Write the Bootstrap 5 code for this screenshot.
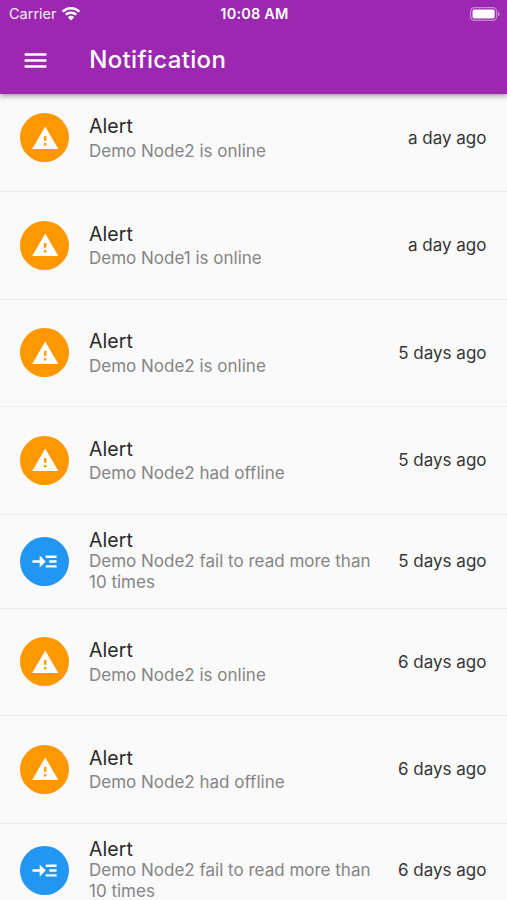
<!DOCTYPE html>
<html lang="en">
<head>
<meta charset="utf-8">
<meta name="viewport" content="width=device-width, initial-scale=1">
<title>Notification</title>
<link href="https://cdn.jsdelivr.net/npm/bootstrap@5.3.0/dist/css/bootstrap.min.css" rel="stylesheet">
<style>
body { font-family: Inter, "Liberation Sans", sans-serif; background: #fafafa; color: #292929; height: 900px; }
.app-header { background: #9c27b0; height: 94px; box-shadow: 0 2px 5px rgba(0,0,0,.38); z-index: 2; }
.status-bar { height: 27px; padding: 0 7px 0 9px; font-size: 14.5px; line-height: 27px; }
.status-side { flex: 1 1 0; }
.carrier { letter-spacing: 0; opacity: .92; }
.clock { font-weight: 600; letter-spacing: .2px; }
.title-bar { height: 66px; padding-left: 20.5px; }
.page-title { font-size: 24px; font-weight: 500; line-height: 30px; letter-spacing: .33px; margin-left: 39.8px; }
.feed { min-height: 0; }
/* The list is scrolled slightly beneath the header. */
.feed-list { margin-top: -9.3px; }
.feed-item { height: 107.5px; flex: none; padding: 0 20.5px 0 20.4px; border-bottom: 1px solid #eeeeee; }
.feed-item.tall { height: 94px; }
.avatar { width: 49px; height: 49px; margin-right: 19.6px; background: #ff9800; color: #fff; }
.tall .avatar { background: #2196f3; }
.item-title { font-size: 19.5px; line-height: 24px; letter-spacing: .1px; margin-bottom: 2px; }
.item-sub { font-size: 17px; line-height: 20.7px; letter-spacing: 0; color: #858585; margin-top: 2.7px; }
.tall .item-title { line-height: 22px; margin-bottom: 0; }
.tall .item-sub { margin-top: 0; line-height: 21px; }
.item-time { font-size: 17px; color: #353535; margin-left: 16px; padding-top: 1px; }
</style>
<script src="https://cdn.jsdelivr.net/npm/bootstrap@5.3.0/dist/js/bootstrap.bundle.min.js"></script>
</head>
<body class="d-flex flex-column overflow-hidden">
<svg class="d-none">
  <symbol id="warn" viewBox="0 0 24 24"><path fill="currentColor" d="M1 21h22L12 2 1 21zm12-3h-2v-2h2v2zm0-4h-2v-4h2v4z"/></symbol>
  <symbol id="read" viewBox="0 0 24 24"><path fill="currentColor" d="M22 7h-9v2h9V7zm0 8h-9v2h9v-2zm0-4h-6v2h6v-2zm-9 1L8 7v4H2v2h6v4l5-5z"/></symbol>
</svg>
<header class="app-header position-relative flex-shrink-0 text-white">
  <div class="status-bar d-flex align-items-center">
    <div class="status-side d-flex align-items-center">
      <span class="carrier">Carrier</span>
      <svg class="ms-1" width="20" height="15" viewBox="0 0 20 15" fill="none" stroke="#fff" stroke-width="2.5"><path d="M1.6 5.6a12 12 0 0 1 16.8 0M4.8 8.7a7.6 7.6 0 0 1 10.4 0"/><path fill="#fff" stroke="none" d="M6.8 11.2a4.7 4.7 0 0 1 6.4 0L10 14.5z"/></svg>
    </div>
    <span class="clock">10:08 AM</span>
    <div class="status-side d-flex justify-content-end">
      <svg width="30" height="14" viewBox="0 0 30 14"><rect x=".6" y=".6" width="26" height="12.8" rx="3.8" fill="none" stroke="#fff" stroke-opacity=".45" stroke-width="1.2"/><rect x="2.5" y="2.5" width="22.2" height="9" rx="2" fill="#fff"/><path d="M28 4.8v4.4q1.7-.7 1.7-2.2T28 4.8z" fill="#fff" fill-opacity=".5"/></svg>
    </div>
  </div>
  <div class="title-bar d-flex align-items-center">
    <svg width="29" height="29" viewBox="0 0 24 24" role="img" aria-label="Menu"><path fill="#fff" d="M3 18h18v-2H3v2zm0-5h18v-2H3v2zm0-7v2h18V6H3z"/></svg>
    <h1 class="page-title mb-0">Notification</h1>
  </div>
</header>
<main class="feed flex-grow-1 overflow-hidden">
  <div class="feed-list d-flex flex-column">
    <div class="feed-item d-flex align-items-center"><div class="avatar rounded-circle d-flex flex-shrink-0 align-items-center justify-content-center"><svg width="28.5" height="28.5"><use href="#warn"/></svg></div><div class="flex-grow-1"><div class="item-title">Alert</div><div class="item-sub">Demo Node2 is online</div></div><div class="item-time text-nowrap">a day ago</div></div>
    <div class="feed-item d-flex align-items-center"><div class="avatar rounded-circle d-flex flex-shrink-0 align-items-center justify-content-center"><svg width="28.5" height="28.5"><use href="#warn"/></svg></div><div class="flex-grow-1"><div class="item-title">Alert</div><div class="item-sub">Demo Node1 is online</div></div><div class="item-time text-nowrap">a day ago</div></div>
    <div class="feed-item d-flex align-items-center"><div class="avatar rounded-circle d-flex flex-shrink-0 align-items-center justify-content-center"><svg width="28.5" height="28.5"><use href="#warn"/></svg></div><div class="flex-grow-1"><div class="item-title">Alert</div><div class="item-sub">Demo Node2 is online</div></div><div class="item-time text-nowrap">5 days ago</div></div>
    <div class="feed-item d-flex align-items-center"><div class="avatar rounded-circle d-flex flex-shrink-0 align-items-center justify-content-center"><svg width="28.5" height="28.5"><use href="#warn"/></svg></div><div class="flex-grow-1"><div class="item-title">Alert</div><div class="item-sub">Demo Node2 had offline</div></div><div class="item-time text-nowrap">5 days ago</div></div>
    <div class="feed-item tall d-flex align-items-center"><div class="avatar rounded-circle d-flex flex-shrink-0 align-items-center justify-content-center"><svg width="29" height="29"><use href="#read"/></svg></div><div class="flex-grow-1"><div class="item-title">Alert</div><div class="item-sub">Demo Node2 fail to read more than 10 times</div></div><div class="item-time text-nowrap">5 days ago</div></div>
    <div class="feed-item d-flex align-items-center"><div class="avatar rounded-circle d-flex flex-shrink-0 align-items-center justify-content-center"><svg width="28.5" height="28.5"><use href="#warn"/></svg></div><div class="flex-grow-1"><div class="item-title">Alert</div><div class="item-sub">Demo Node2 is online</div></div><div class="item-time text-nowrap">6 days ago</div></div>
    <div class="feed-item d-flex align-items-center"><div class="avatar rounded-circle d-flex flex-shrink-0 align-items-center justify-content-center"><svg width="28.5" height="28.5"><use href="#warn"/></svg></div><div class="flex-grow-1"><div class="item-title">Alert</div><div class="item-sub">Demo Node2 had offline</div></div><div class="item-time text-nowrap">6 days ago</div></div>
    <div class="feed-item tall d-flex align-items-center"><div class="avatar rounded-circle d-flex flex-shrink-0 align-items-center justify-content-center"><svg width="29" height="29"><use href="#read"/></svg></div><div class="flex-grow-1"><div class="item-title">Alert</div><div class="item-sub">Demo Node2 fail to read more than 10 times</div></div><div class="item-time text-nowrap">6 days ago</div></div>
  </div>
</main>
</body>
</html>
